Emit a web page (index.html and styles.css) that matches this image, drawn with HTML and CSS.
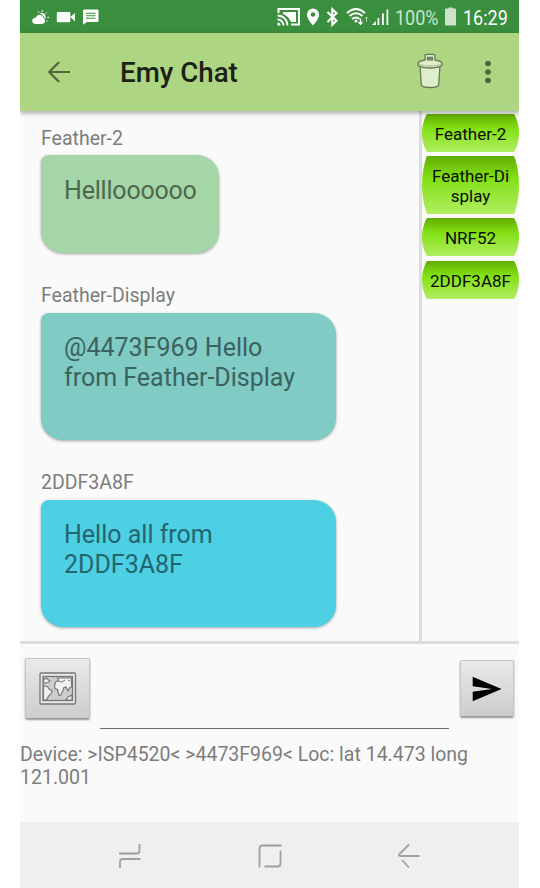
FILE: index.html
```html
<!DOCTYPE html>
<html lang="en">
<head>
<meta charset="utf-8">
<title>Emy Chat</title>
<link rel="stylesheet" href="styles.css">
</head>
<body>
<div class="phone">
  <div class="status">
    <div class="status-left">
      <svg width="72" height="24" viewBox="0 0 72 24" fill="#fff">
        <path d="M6 19Q2 18.800 2.200 15.800Q2.500 13 5.500 12.800Q7 9.500 10 9.800Q12.500 10 13.300 12.800Q16 15.500 14.500 17.700Q13.500 19 11 19Z"/>
        <path d="M9.500 8.600Q12 6.600 14.600 9.200Q16.600 12 14.700 14.300Q13.500 9 9.500 8.600Z"/>
        <path d="M12.300 5v2M8 6.200l1 1.500M16.800 7.500l-1.400 1.300M17.200 12.300h2M16.200 15.500l1.200 1" stroke="#fff" stroke-width="1"/>
        <rect x="26.800" y="7" width="13.500" height="10.300" rx="1"/><path d="M40.300 12L45 8v8.500z"/>
        <path d="M54.500 4.500h13q1 0 1 1v10.500q0 1-1 1H57l-4 2.700V5.500q0-1 1.500-1z"/>
        <path d="M56 8.200h9.500M56 10.700h9.500M56 13.200h9.500" stroke="#398f3d" stroke-width="1.100"/>
      </svg>
    </div>
    <div class="status-right">
      <svg class="signals" width="116" height="26" viewBox="0 0 116 26" fill="#fff">
        <g fill="none" stroke="#fff">
          <path d="M5.500 9V5h20.500v15.500H18" stroke-width="2"/>
          <path d="M4.500 11.500a10 10 0 0 1 10 10M4.500 15.500a6 6 0 0 1 6 6" stroke-width="1.800"/>
          <path d="M54.500 8l9 8.700-4.200 4.100V5.200l4.200 4-9 8.800" stroke-width="2.100"/>
          <path d="M74 9q9-8 18 0M76.500 12q6.500-5.500 13 0M79 15q4-3 7.500 0" stroke-width="1.900"/>
          <path d="M87.500 14.500v5.500m-2-2l2 2.200 2-2.200" stroke-width="1.300"/>
          <path d="M93.500 18v-5m-1.500 1.500l1.500-1.500 1.500 1.500" stroke-width="1" opacity=".55"/>
        </g>
        <path d="M4.500 18.500a3 3 0 0 1 3 3h-3z"/>
        <path d="M10 8h13v10h-5q-2.500-6-8-8z"/>
        <path fill-rule="evenodd" d="M40 4.500a6 6 0 0 1 6 6q0 4.500-6 11-6-6.500-6-11a6 6 0 0 1 6-6zm0 3.700a2.300 2.300 0 1 0 0 4.600 2.300 2.300 0 0 0 0-4.600z"/>
        <circle cx="83" cy="17" r="1.600"/>
        <path d="M99 21l4-4v4zM104.500 14h1.800v7h-1.800zM109 9.500h1.800V21h-1.800zM113.500 5.500h1.800V21h-1.800z"/>
      </svg>
      <span class="percent">100%</span>
      <svg class="battery" width="12" height="19" viewBox="0 0 12 19"><path d="M3.500 1.500V.5h4v1h2.500q1 0 1 1V17.500q0 1-1 1H1q-1 0-1-1V2.500q0-1 1-1z" fill="#cde3ce"/></svg>
      <span class="clock">16:29</span>
    </div>
  </div>
  <header class="appbar">
    <svg class="back" width="24" height="24" viewBox="0 0 24 24"><path d="M23 12H2.500M12.200 2L2.200 12l10 10" fill="none" stroke="#53663f" stroke-width="2.200"/></svg>
    <h1>Emy Chat</h1>
    <svg class="trash" width="26" height="36" viewBox="0 0 26 36" fill="#deedcc" stroke="#67794f" stroke-width="1.300">
      <path d="M3 12l1.300 20q1 2.500 8.700 2.500t8.700-2.500L23 12z"/>
      <path d="M8 7V3q0-1.700 2-1.700h6q2 0 2 1.700v4q6.500 1 7 3.500v2Q21 15 13 15T1 12.500v-2Q1.500 8 8 7z"/>
      <path d="M10.500 6.800V4.500h5v2.300z" fill="#8fa271"/><path d="M2 11.500q5 1.700 11 1.700t11-1.700" fill="none" stroke="#a9bb90"/>
    </svg>
    <svg class="more" width="6" height="24" viewBox="0 0 6 24" fill="#4d603a"><circle cx="3" cy="3.500" r="2.800"/><circle cx="3" cy="12" r="2.800"/><circle cx="3" cy="20.500" r="2.800"/></svg>
  </header>
  <main class="content">
    <section class="messages">
      <div class="sender">Feather-2</div>
      <div class="bubble green">Hellloooooo</div>
      <div class="sender">Feather-Display</div>
      <div class="bubble teal">@4473F969 Hello<br>from Feather-Display</div>
      <div class="sender">2DDF3A8F</div>
      <div class="bubble cyan">Hello all from<br>2DDF3A8F</div>
    </section>
    <aside class="nodes">
      <button class="node">Feather-2</button>
      <button class="node">Feather-Di<br>splay</button>
      <button class="node">NRF52</button>
      <button class="node">2DDF3A8F</button>
    </aside>
  </main>
  <div class="composer">
    <button class="key map">
      <svg width="38" height="34" viewBox="0 0 38 34" fill="none" stroke="#777" stroke-width="1.300">
        <rect x="1" y="1" width="35.500" height="31" rx="1" fill="#e8e8e8"/>
        <rect x="4" y="4.500" width="29.500" height="24" fill="#cdcdcd"/>
        <g fill="#f0f0f0" stroke-width="1.200">
          <path d="M4.500 8l2.500-2 4 3-2 1.500-4.500.500z"/>
          <path d="M4.500 14l4 .500 1.500 2.500 3 1.500-.5 3-3 2.500-1.500 3.500-3.500 1z"/>
          <path d="M15.500 14l1-4 3-1.500-1-2.500h14v9l-2 1-1.500 3-2-4-2 .500-1 3-2.500 5h-1.500l-1.500-6-2.500-1z"/>
          <path d="M27 28l2-3 4-2v5z"/>
        </g>
        <path d="M19 9l4 1 3-2M29 8l2 1" stroke-width="1"/>
      </svg>
    </button>
    <div class="field"></div>
    <button class="key send"><svg width="30" height="26" viewBox="0 0 30 26"><path d="M.7.700L29.500 13 .700 25.300v-9.600L20 13 .700 10.300z"/></svg></button>
  </div>
  <div class="device">Device: &gt;ISP4520&lt; &gt;4473F969&lt; Loc: lat 14.473 long<br>121.001</div>
  <nav class="nav">
    <svg width="22" height="26" viewBox="0 0 22 26"><path d="M0 10.500h17.500q3 0 3-3V1M21.500 16H4q-3 0-3 3v6"/></svg>
    <svg width="24" height="24" viewBox="0 0 24 24"><path d="M23.500 1.500H4.500q-3 0-3 3v19M22.500 6.500v13q0 3-3 3H6.500"/></svg>
    <svg width="22" height="26" viewBox="0 0 22 26"><path d="M21.500 13H2q-2-.5-.5-2L11 1.500M4 17l7 7.500"/></svg>
  </nav>
</div>
</body>
</html>
```
FILE: styles.css
```css
* { box-sizing: border-box; }
body { margin: 0; background: #fff; font-family: Roboto, "Liberation Sans", sans-serif; }
svg { display: block; flex: none; }
button { border: 0; margin: 0; padding: 0; font-family: inherit; }
.phone { width: 499px; height: 888px; margin-left: 20px; background: #fafafa; display: flex; flex-direction: column; overflow: hidden; }
.status { height: 33px; flex: none; background: #398f3d; color: #fff; display: flex; justify-content: space-between; padding: 4px 11px 0 10px; }
.status-left { padding-top: 1px; }
.status-right { display: flex; }
.percent, .clock { font-size: 20px; line-height: 28px; white-space: nowrap; transform-origin: left center; transform: scaleX(.9); }
.percent { color: #cde3ce; width: 43px; margin-left: 6px; }
.battery { margin: 3px 6px 0 7px; }
.clock { width: 45px; }
.appbar { height: 78px; flex: none; background: #aed582; display: flex; align-items: center; padding: 0 28px 0 27px; box-shadow: 0 2px 5px rgba(0,0,0,.35); position: relative; z-index: 1; }
.appbar h1 { margin: 2px auto 0 49px; font-size: 27.700px; font-weight: 500; line-height: 38px; color: #1b2114; }
.more { margin-left: 42px; }
.trash { margin-top: -2px; }
.content { height: 533px; flex: none; display: flex; border-bottom: 3px solid #dcdcdc; }
.messages { width: 399px; flex: none; padding: 16px 21px 0; }
.sender { font-size: 19.500px; line-height: 23px; color: #7d7d7d; margin-bottom: 5px; }
.bubble + .sender { margin-bottom: 6px; }
.bubble { width: 295px; height: 127px; padding: 20px 23px; margin-bottom: 31px; border-radius: 8px 22px 22px 22px; font-size: 25px; line-height: 30px; white-space: nowrap; box-shadow: 0 1px 3px rgba(0,0,0,.35); }
.green { width: 178px; height: 98px; padding-top: 21px; letter-spacing: -.2px; background: #a5d6a7; color: #4d6750; }
.teal { background: #80cbc4; color: #3c625f; }
.cyan { background: #4dd0e3; color: #25656f; }
.bubble:last-child { margin-bottom: 0; }
.nodes { flex: 1; border-left: 3px solid #dcdcdc; padding-top: 3px; display: flex; flex-direction: column; gap: 4px; }
.node { width: 97px; height: 38px; margin-bottom: 1px; padding-top: 2px; flex: none; font-size: 17px; line-height: 20px; color: #080d04; clip-path: ellipse(50% 115% at 50% 50%); background: linear-gradient(#62ad00, #82e015 38%, #b0ee60); }
.node:nth-child(2) { height: 58px; margin-top: -1px; }
.node:nth-child(3) { margin-top: -1px; }
.composer { height: 99px; flex: none; display: flex; padding: 14px 5px 0; }
.key { display: flex; align-items: center; justify-content: center; background: linear-gradient(#e9e9e9, #cdcdcd); border: 1px solid #c6c6c6; border-bottom-color: #999; border-radius: 2px; box-shadow: 0 1px 2px rgba(0,0,0,.4); }
.map { width: 65px; height: 61px; }
.field { width: 349px; height: 71px; margin: 0 11px 0 10px; border-bottom: 1px solid #6c6c6c; }
.send { width: 54px; height: 57px; margin-top: 2px; }
.device { height: 79px; flex: none; padding-top: 1px; font-size: 19.500px; line-height: 22.500px; color: #7d7d7d; white-space: nowrap; }
.nav { height: 67px; flex: none; background: #efefef; display: flex; align-items: center; padding: 0 99px; justify-content: space-between; }
.nav path { fill: none; stroke: #a0a0a0; stroke-width: 1.800; }
```
